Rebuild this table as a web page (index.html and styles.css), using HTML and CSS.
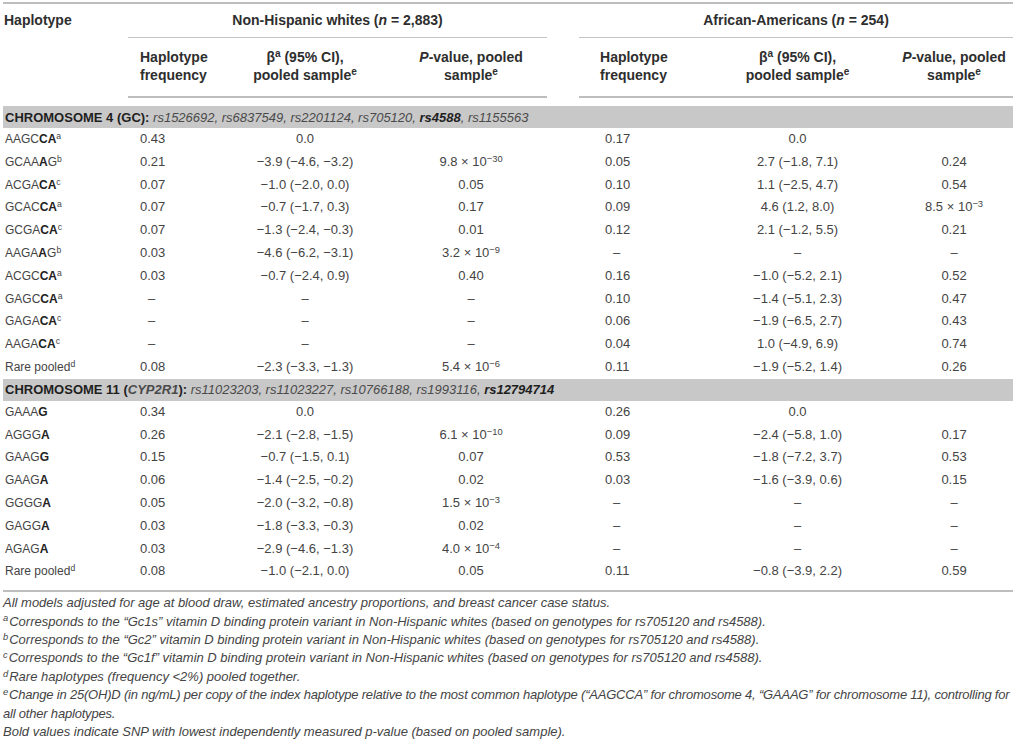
FILE: index.html
```html
<!DOCTYPE html>
<html lang="en">
<head>
    <meta charset="UTF-8">
    <title>Haplotype associations with 25(OH)D</title>
    <link rel="stylesheet" href="styles.css">
</head>
<body>
    <table class="hap-table">
        <colgroup>
            <col class="c-hap">
            <col class="c-freq">
            <col class="c-beta">
            <col class="c-pval">
            <col class="c-gap">
            <col class="c-freq2">
            <col class="c-beta2">
            <col class="c-pval2">
        </colgroup>
        <thead>
            <tr class="head-top">
                <th class="hap" rowspan="2">Haplotype</th>
                <th class="group" colspan="3">Non-Hispanic whites (<i>n</i> = 2,883)</th>
                <th rowspan="2"></th>
                <th class="group" colspan="3">African-Americans (<i>n</i> = 254)</th>
            </tr>
            <tr class="head-sub">
                <th class="fq">Haplotype<br>frequency</th>
                <th class="mid">β<sup>a</sup> (95% CI),<br>pooled sample<sup>e</sup></th>
                <th class="mid"><i>P</i>-value, pooled<br>sample<sup>e</sup></th>
                <th class="fq2">Haplotype<br>frequency</th>
                <th class="mid">β<sup>a</sup> (95% CI),<br>pooled sample<sup>e</sup></th>
                <th class="mid"><i>P</i>-value, pooled<br>sample<sup>e</sup></th>
            </tr>
        </thead>
        <tbody>
            <tr class="spacer"><td colspan="8"></td></tr>
            <tr class="band">
                <td colspan="8"><b>CHROMOSOME 4 (GC):</b> <i>rs1526692, rs6837549, rs2201124, rs705120, <b>rs4588</b>, rs1155563</i></td>
            </tr>
            <tr>
                <td class="hap">AAGC<b>CA</b><sup>a</sup></td>
                <td class="fq">0.43</td><td class="mid">0.0</td><td class="mid"></td><td></td>
                <td class="fq2">0.17</td><td class="mid">0.0</td><td class="mid"></td>
            </tr>
            <tr>
                <td class="hap">GCAA<b>A</b>G<sup>b</sup></td>
                <td class="fq">0.21</td><td class="mid">−3.9 (−4.6, −3.2)</td><td class="mid">9.8 × 10<sup>−30</sup></td><td></td>
                <td class="fq2">0.05</td><td class="mid">2.7 (−1.8, 7.1)</td><td class="mid">0.24</td>
            </tr>
            <tr>
                <td class="hap">ACGA<b>CA</b><sup>c</sup></td>
                <td class="fq">0.07</td><td class="mid">−1.0 (−2.0, 0.0)</td><td class="mid">0.05</td><td></td>
                <td class="fq2">0.10</td><td class="mid">1.1 (−2.5, 4.7)</td><td class="mid">0.54</td>
            </tr>
            <tr>
                <td class="hap">GCAC<b>CA</b><sup>a</sup></td>
                <td class="fq">0.07</td><td class="mid">−0.7 (−1.7, 0.3)</td><td class="mid">0.17</td><td></td>
                <td class="fq2">0.09</td><td class="mid">4.6 (1.2, 8.0)</td><td class="mid">8.5 × 10<sup>−3</sup></td>
            </tr>
            <tr>
                <td class="hap">GCGA<b>CA</b><sup>c</sup></td>
                <td class="fq">0.07</td><td class="mid">−1.3 (−2.4, −0.3)</td><td class="mid">0.01</td><td></td>
                <td class="fq2">0.12</td><td class="mid">2.1 (−1.2, 5.5)</td><td class="mid">0.21</td>
            </tr>
            <tr>
                <td class="hap">AAGA<b>A</b>G<sup>b</sup></td>
                <td class="fq">0.03</td><td class="mid">−4.6 (−6.2, −3.1)</td><td class="mid">3.2 × 10<sup>−9</sup></td><td></td>
                <td class="fq2 nil">–</td><td class="mid">–</td><td class="mid">–</td>
            </tr>
            <tr>
                <td class="hap">ACGC<b>CA</b><sup>a</sup></td>
                <td class="fq">0.03</td><td class="mid">−0.7 (−2.4, 0.9)</td><td class="mid">0.40</td><td></td>
                <td class="fq2">0.16</td><td class="mid">−1.0 (−5.2, 2.1)</td><td class="mid">0.52</td>
            </tr>
            <tr>
                <td class="hap">GAGC<b>CA</b><sup>a</sup></td>
                <td class="fq nil">–</td><td class="mid">–</td><td class="mid">–</td><td></td>
                <td class="fq2">0.10</td><td class="mid">−1.4 (−5.1, 2.3)</td><td class="mid">0.47</td>
            </tr>
            <tr>
                <td class="hap">GAGA<b>CA</b><sup>c</sup></td>
                <td class="fq nil">–</td><td class="mid">–</td><td class="mid">–</td><td></td>
                <td class="fq2">0.06</td><td class="mid">−1.9 (−6.5, 2.7)</td><td class="mid">0.43</td>
            </tr>
            <tr>
                <td class="hap">AAGA<b>CA</b><sup>c</sup></td>
                <td class="fq nil">–</td><td class="mid">–</td><td class="mid">–</td><td></td>
                <td class="fq2">0.04</td><td class="mid">1.0 (−4.9, 6.9)</td><td class="mid">0.74</td>
            </tr>
            <tr>
                <td class="hap">Rare pooled<sup>d</sup></td>
                <td class="fq">0.08</td><td class="mid">−2.3 (−3.3, −1.3)</td><td class="mid">5.4 × 10<sup>−6</sup></td><td></td>
                <td class="fq2">0.11</td><td class="mid">−1.9 (−5.2, 1.4)</td><td class="mid">0.26</td>
            </tr>

            <tr class="band">
                <td colspan="8"><b>CHROMOSOME 11 (<i>CYP2R1</i>):</b> <i>rs11023203, rs11023227, rs10766188, rs1993116, <b>rs12794714</b></i></td>
            </tr>
            <tr>
                <td class="hap">GAAA<b>G</b></td>
                <td class="fq">0.34</td><td class="mid">0.0</td><td class="mid"></td><td></td>
                <td class="fq2">0.26</td><td class="mid">0.0</td><td class="mid"></td>
            </tr>
            <tr>
                <td class="hap">AGGG<b>A</b></td>
                <td class="fq">0.26</td><td class="mid">−2.1 (−2.8, −1.5)</td><td class="mid">6.1 × 10<sup>−10</sup></td><td></td>
                <td class="fq2">0.09</td><td class="mid">−2.4 (−5.8, 1.0)</td><td class="mid">0.17</td>
            </tr>
            <tr>
                <td class="hap">GAAG<b>G</b></td>
                <td class="fq">0.15</td><td class="mid">−0.7 (−1.5, 0.1)</td><td class="mid">0.07</td><td></td>
                <td class="fq2">0.53</td><td class="mid">−1.8 (−7.2, 3.7)</td><td class="mid">0.53</td>
            </tr>
            <tr>
                <td class="hap">GAAG<b>A</b></td>
                <td class="fq">0.06</td><td class="mid">−1.4 (−2.5, −0.2)</td><td class="mid">0.02</td><td></td>
                <td class="fq2">0.03</td><td class="mid">−1.6 (−3.9, 0.6)</td><td class="mid">0.15</td>
            </tr>
            <tr>
                <td class="hap">GGGG<b>A</b></td>
                <td class="fq">0.05</td><td class="mid">−2.0 (−3.2, −0.8)</td><td class="mid">1.5 × 10<sup>−3</sup></td><td></td>
                <td class="fq2 nil">–</td><td class="mid">–</td><td class="mid">–</td>
            </tr>
            <tr>
                <td class="hap">GAGG<b>A</b></td>
                <td class="fq">0.03</td><td class="mid">−1.8 (−3.3, −0.3)</td><td class="mid">0.02</td><td></td>
                <td class="fq2 nil">–</td><td class="mid">–</td><td class="mid">–</td>
            </tr>
            <tr>
                <td class="hap">AGAG<b>A</b></td>
                <td class="fq">0.03</td><td class="mid">−2.9 (−4.6, −1.3)</td><td class="mid">4.0 × 10<sup>−4</sup></td><td></td>
                <td class="fq2 nil">–</td><td class="mid">–</td><td class="mid">–</td>
            </tr>
            <tr class="last">
                <td class="hap">Rare pooled<sup>d</sup></td>
                <td class="fq">0.08</td><td class="mid">−1.0 (−2.1, 0.0)</td><td class="mid">0.05</td><td></td>
                <td class="fq2">0.11</td><td class="mid">−0.8 (−3.9, 2.2)</td><td class="mid">0.59</td>
            </tr>
        </tbody>
    </table>

    <div class="notes">
        <p>All models adjusted for age at blood draw, estimated ancestry proportions, and breast cancer case status.</p>
        <p><sup>a</sup>Corresponds to the “Gc1s” vitamin D binding protein variant in Non-Hispanic whites (based on genotypes for rs705120 and rs4588).</p>
        <p><sup>b</sup>Corresponds to the “Gc2” vitamin D binding protein variant in Non-Hispanic whites (based on genotypes for rs705120 and rs4588).</p>
        <p><sup>c</sup>Corresponds to the “Gc1f” vitamin D binding protein variant in Non-Hispanic whites (based on genotypes for rs705120 and rs4588).</p>
        <p><sup>d</sup>Rare haplotypes (frequency &lt;2%) pooled together.</p>
        <p class="tight"><sup>e</sup>Change in 25(OH)D (in ng/mL) per copy of the index haplotype relative to the most common haplotype (“AAGCCA” for chromosome 4, “GAAAG” for chromosome 11), controlling for<br>all other haplotypes.</p>
        <p>Bold values indicate SNP with lowest independently measured p-value (based on pooled sample).</p>
    </div>
</body>
</html>
```

FILE: styles.css
```css
/* Page */
body {
    margin: 0;
    padding: 2px 4px 0 3px;
    font-family: "Liberation Sans", Arial, sans-serif;
    color: #444;
    background-color: #fff;
}

/* Table */
.hap-table {
    width: 1010px;
    border-collapse: collapse;
    table-layout: fixed;
    font-size: 13px;
    border-top: 2px solid #bdbdbd;
    border-bottom: 2px solid #bdbdbd;
}

.c-hap { width: 125px; }
.c-freq { width: 87px; }
.c-beta { width: 180px; }
.c-pval { width: 152px; }
.c-gap { width: 32px; }
.c-freq2 { width: 121px; }
.c-beta2 { width: 195px; }
.c-pval2 { width: 118px; }

th {
    font-weight: bold;
    font-size: 14px;
    color: #2e2e2e;
    padding: 0;
}

.head-top th {
    line-height: 17px;
    padding: 8px 0;
    vertical-align: top;
}

.head-top th.hap {
    text-align: left;
    padding-left: 1px;
}

.head-top .group {
    text-align: center;
    border-bottom: 1px solid #c4c4c4;
}

.head-sub th {
    line-height: 18px;
    padding: 10px 0 12px;
    border-bottom: 2px solid #bdbdbd;
}

.head-sub th.fq {
    text-align: left;
    padding-left: 12px;
}

.head-sub th.fq2 {
    text-align: left;
    padding-left: 21px;
}

.spacer td {
    height: 8px;
    padding: 0;
}

/* Chromosome bands */
.band td {
    background-color: #c8c8c8;
    color: #333;
    font-size: 13px;
    line-height: 15px;
    padding: 3.5px 2px;
}

.band i {
    color: #4a4a4a;
}

.band b {
    color: #1f1f1f;
}

/* Data rows */
td {
    line-height: 14.8px;
    padding: 4px 0;
    white-space: nowrap;
}

td.hap {
    font-size: 12px;
    padding-left: 2px;
}

td b {
    color: #222;
}

td.fq {
    text-align: left;
    padding-left: 12px;
}

td.fq2 {
    text-align: left;
    padding-left: 26px;
}

td.fq.nil {
    padding-left: 20px;
}

td.fq2.nil {
    padding-left: 34px;
}

.mid {
    text-align: center;
}

.last td {
    padding-bottom: 11px;
}

sup {
    font-size: 0.72em;
    line-height: 0;
    vertical-align: 0.45em;
}

/* Footnotes */
.notes {
    margin-top: 2px;
    font-size: 13px;
    line-height: 18.4px;
    font-style: italic;
    color: #444;
}

.notes p {
    margin: 0;
}

.notes sup {
    margin-right: 1px;
}

.notes .tight {
    letter-spacing: -0.2px;
}
```
